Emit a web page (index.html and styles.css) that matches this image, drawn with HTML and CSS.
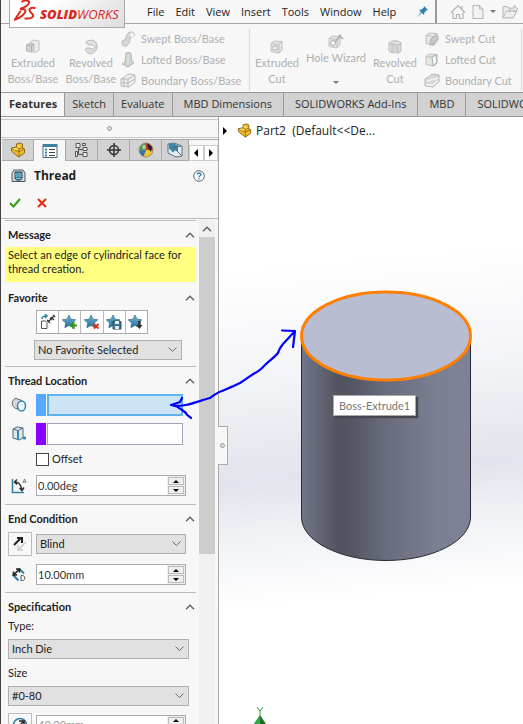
FILE: index.html
```html
<!DOCTYPE html>
<html lang="en">
<head>
<meta charset="utf-8">
<title>SOLIDWORKS - Part2</title>
<link rel="stylesheet" href="styles.css">
</head>
<body>
<svg class="defs" aria-hidden="true">
  <defs>
    <linearGradient id="side" x1="0" x2="1">
      <stop offset="0" stop-color="#70758a"/><stop offset=".1" stop-color="#636775"/><stop offset=".22" stop-color="#51535f"/><stop offset=".3" stop-color="#545664"/><stop offset=".5" stop-color="#686c7c"/><stop offset=".8" stop-color="#7b7f92"/><stop offset="1" stop-color="#7e8296"/>
    </linearGradient>
    <linearGradient id="blue" x1="0" y1="0" x2="0" y2="1"><stop offset="0" stop-color="#70b6d6"/><stop offset="1" stop-color="#276c95"/></linearGradient>
    <symbol id="part" viewBox="0 0 16 16"><path d="M1.500 6 6.500 5V2L10 1l2.500 1v4l2 1v4L9 15 5.500 12.500 1.500 9z" fill="#f0bd2d" stroke="#8a6713"/><path d="M6.500 5 9 6.500 12.500 6M9 6.500v3L14 7.500M1.500 6 5 8.500 9 9.500V15" fill="none" stroke="#8a6713" stroke-width=".8"/><path d="m7 3 3 1v2L7.500 5zM2.500 6.500 6 6l2 1-2.500 1z" fill="#ffe77c"/></symbol>
    <symbol id="star" viewBox="0 0 16 16"><path d="m7 1 2 4.200 4.800.6-3.500 3.200.9 4.700L7 11.400l-4.200 2.300.9-4.700L.2 5.800 5 5.200z" fill="url(#blue)" stroke="#346b8b" stroke-width=".7"/></symbol>
    <symbol id="chev" viewBox="0 0 10 6"><path d="M1 5.200 5 1.200l4 4" fill="none" stroke="#606060" stroke-width="1.400"/></symbol>
    <symbol id="cube" viewBox="0 0 16 16"><path d="M2 4.500 5 2l8 .5V11l-3 3-8-1.500z" fill="#e5e5e5" stroke="#c0c0c0"/><path d="m2 4.500 8 1 3-3M10 5.500V14" fill="none" stroke="#c0c0c0"/></symbol>
  </defs>
</svg>
<div class="app">
  <header class="menubar">
    <div class="brand">
      <svg width="24" height="22" viewBox="0 0 24 22" aria-hidden="true"><path d="M7.500 2C10 0 16 0 15 3 14 6 9 8 6 9M6 9.500c6-1.500 7 1.500 3 5.500-3 3-6 4-8 4.500L6.500 11M21.500 8C16 7 14.500 9 16 11.500c2 2.500 5 3.500 2 6-2 1.500-5 1-7.500 1" fill="none" stroke="#da291c" stroke-width="2"/></svg>
      <span><b>SOLID</b>WORKS</span>
    </div>
    <nav class="menus">
      <a href="#">File</a><a href="#">Edit</a><a href="#">View</a><a href="#">Insert</a><a href="#">Tools</a><a href="#">Window</a><a href="#">Help</a>
    </nav>
    <button class="pin" aria-label="Pin menu"><svg width="11" height="11" viewBox="0 0 11 11"><path d="M7 0 11 4 9.500 4.200 7.500 6.500 7 9 4.800 6.800 0 11 4 6 2 4l2.500-.5 2.300-2z" fill="#2e7fae"/></svg></button>
    <div class="quick">
      <button aria-label="Home"><svg width="16" height="16" viewBox="0 0 16 16"><path d="M1 8.500 8 1.500l7 7M3 8v6.500h3.500v-4h3v4H13V8M12 5V2" fill="none" stroke="#b5b5b5" stroke-width="1.200"/></svg></button>
      <button aria-label="New"><svg width="12" height="16" viewBox="0 0 12 16"><path d="M1 1.500h6.500L11 5v9.500H1zM7.500 1.500V5H11" fill="#f3f3f3" stroke="#b5b5b5"/></svg></button>
      <i class="down"></i>
      <button aria-label="Open"><svg width="17" height="16" viewBox="0 0 17 16"><path d="M1 14V2.500h4l1 1.500h3M1 14h10l4-7H4.500zM7 8c0-3 2-4 5-4V1.500L16 5l-4 3V6" fill="#ececec" stroke="#b5b5b5"/></svg></button>
    </div>
  </header>

  <section class="ribbon" aria-label="Features commands">
    <button class="big wide" disabled><svg width="16" height="16" viewBox="0 0 16 16"><path d="M6 2.500 9 1l5 1v9l-3 2H6z" fill="#ededed" stroke="#c0c0c0"/><path d="M1.500 6 4 4.500l5 .5v6l-2.500 2-5-1z" fill="#d2d2d2" stroke="#b9b9b9"/><path d="m1.500 6 5 1L9 5M6.500 7v6" fill="none" stroke="#b0b0b0"/></svg>Extruded<br>Boss/Base</button>
    <button class="big mid" disabled><svg width="16" height="16" viewBox="0 0 16 16"><path d="M3 3C8-1 15 2 14 8s-6 8-9 6-4-5 0-5 4 2 6 0 0-3-3-3-5-1-5-3z" fill="#dadada" stroke="#b9b9b9"/><path d="M5 3c3-1 6 0 6 3" fill="none" stroke="#f8f8f8"/></svg>Revolved<br>Boss/Base</button>
    <div class="stack boss">
      <button disabled><svg width="16" height="16" viewBox="0 0 16 16"><path d="M2 11c0-3 4-1 4-4s2-6 5-6 4 2 3 4-4 0-4 3-2 7-5 7-3-2-3-4z" fill="#d6d6d6" stroke="#b9b9b9"/><ellipse cx="12" cy="4" rx="2" ry="2.500" fill="#f2f2f2"/></svg>Swept Boss/Base</button>
      <button disabled><svg width="16" height="16" viewBox="0 0 16 16"><path d="m6 1 4-.5 1 1L12 9l2 2-6 4-6-3 3-2z" fill="#cfcfcf" stroke="#b9b9b9"/><path d="M8 2v11" stroke="#e9e9e9"/></svg>Lofted Boss/Base</button>
      <button disabled><svg width="16" height="16" viewBox="0 0 16 16"><path d="M1 6c3-2 4-2 6-4 2-2 6 0 8 0v7l-6 5-8-1z" fill="#eee" stroke="#b9b9b9"/><path d="M1 6h7l7-4M8 6v8M4 6v8M1 10h7l7-4" fill="none" stroke="#b9b9b9"/></svg>Boundary Boss/Base</button>
    </div>
    <i class="rule"></i>
    <button class="big" disabled><svg width="16" height="16" viewBox="0 0 16 16"><use href="#cube"/><path d="M4 7h4v4H4z" fill="#f8f8f8" stroke="#b0b0b0"/></svg>Extruded<br>Cut</button>
    <button class="big wizard" disabled><svg width="18" height="16" viewBox="0 0 18 16"><use href="#cube" width="16" height="16"/><path d="m7 9 7-8M12 1l4 4" stroke="#aaa" stroke-width="1.500"/><circle cx="6" cy="9" r="2.500" fill="#f5f5f5" stroke="#b0b0b0"/></svg>Hole Wizard<i class="down"></i></button>
    <button class="big" disabled><svg width="16" height="16" viewBox="0 0 16 16"><path d="M2 4c3-3 9-3 12 0v8c-1 2-3 2-5 2V6L7 5v9c-2 0-4-1-5-2z" fill="#e0e0e0" stroke="#b9b9b9"/><path d="M2 4c2 2 3 1 5 1m2 1c2 0 4 0 5-2M5 6v7m6-7v7" fill="none" stroke="#b9b9b9"/></svg>Revolved<br>Cut</button>
    <div class="stack cut">
      <button disabled><svg width="16" height="16" viewBox="0 0 16 16"><use href="#cube"/><path d="M6 14c0-5 2-10 8-9v4c-3 0-4 2-4 5z" fill="#c8c8c8" stroke="#b0b0b0"/></svg>Swept Cut</button>
      <button disabled><svg width="16" height="16" viewBox="0 0 16 16"><use href="#cube"/><path d="m8 5 4-2 1 7-4 4z" fill="#f5f5f5" stroke="#b0b0b0"/></svg>Lofted Cut</button>
      <button disabled><svg width="16" height="16" viewBox="0 0 16 16"><path d="M1 6c3-2 4-2 6-4 2-2 6 0 8 0v7l-6 5-8-1z" fill="#d6d6d6" stroke="#b9b9b9"/><path d="m3 8 11-3M2 12h7l5-4" stroke="#f5f5f5" stroke-width="1.500" fill="none"/></svg>Boundary Cut</button>
    </div>
    <i class="rule"></i>
  </section>

  <nav class="tabs">
    <a class="on" href="#">Features</a><a href="#">Sketch</a><a href="#">Evaluate</a><a href="#">MBD Dimensions</a><a href="#">SOLIDWORKS Add-Ins</a><a href="#">MBD</a><a href="#">SOLIDWORKS CAM</a>
  </nav>

  <main class="work">
    <aside class="panel">
      <div class="grip"><i class="dot"></i></div>
      <div class="managers">
        <button aria-label="Feature tree"><svg width="16" height="16"><use href="#part"/></svg></button>
        <button class="on" aria-label="Property manager"><svg width="16" height="16" viewBox="0 0 16 16"><path d="M1 1.500h14v13H1z" fill="#fff" stroke="#48677c"/><path d="M1 1h14v3H1z" fill="#3f7fa5"/><path d="M3 6.500h2m-2 3h2m-2 3h2" stroke="#3f7fa5" stroke-width="2"/><path d="M7 6.500h6m-6 3h6m-6 3h6" stroke="#444"/></svg></button>
        <button aria-label="Configurations"><svg width="16" height="16" viewBox="0 0 16 16" fill="#eee" stroke="#555"><path d="M4.500 5v7.500H9M4.500 7.500H9" fill="none"/><path d="M2 1.500h4v4H2zM9 5.500h4v3H9zM9 10.500h4v4H9zM8.500 1.500h3v2h-3zM1.500 9.500h2v5h-2z"/></svg></button>
        <button aria-label="Dimensions"><svg width="16" height="16" viewBox="0 0 16 16" fill="none" stroke="#333" stroke-width="1.500"><circle cx="8" cy="8" r="4.500"/><path d="M8 1v14M1 8h14"/></svg></button>
        <button aria-label="Appearances"><svg width="16" height="16" viewBox="0 0 16 16"><circle cx="8" cy="8" r="7" fill="#f1c52e"/><path d="M8 8 1.500 9A7 7 0 0 1 8 1z" fill="#3a9b48"/><path d="M8 8V1a7 7 0 0 1 7 7z" fill="#d93529"/><path d="m9 1 5 4-1 5-3-4z" fill="#222"/><path d="M8 8 1.500 9a7 7 0 0 0 4 5.500z" fill="#2f6ebc"/><circle cx="8" cy="8" r="7" fill="none" stroke="#777" stroke-width=".7"/><ellipse cx="6" cy="5" rx="2" ry="2.500" fill="#fff" opacity=".5"/></svg></button>
        <button class="last" aria-label="Machining"><svg width="16" height="16" viewBox="0 0 16 16"><path d="m1 2 6-1 8 3v10l-6 1-8-4z" fill="#e6edf1" stroke="#527084"/><path d="m2 2 5-.500 4 2v6l-3-1-2 2-4-4z" fill="#3f86aa"/><path d="m9 8 5 5M6 6l8-2" stroke="#4b6575"/></svg></button>
        <div class="pager"><button aria-label="Previous"><i class="tri left"></i></button><button aria-label="Next"><i class="tri right"></i></button></div>
      </div>
      <div class="title">
        <svg width="15" height="14" viewBox="0 0 15 14"><path d="M1 4 3 1h9l2 3v8.500H1z" fill="#d6dadd" stroke="#50565b"/><path d="M4 3h7v6c0 3-7 3-7 0z" fill="#347ea4" stroke="#28485c"/><path d="M4 5h7M4 7h7M5 9.500h5" stroke="#d3edf8" stroke-width=".6"/></svg>
        <h1>Thread</h1>
        <button aria-label="Help"><svg width="12" height="12" viewBox="0 0 12 12" fill="none"><circle cx="6" cy="6" r="5.300" fill="#fff" stroke="#5b6870"/><path d="M4.200 4.500C4.200 2.500 8 2.500 8 4.500 8 5.800 6 5.800 6 7.200M6 8.200v1.300" stroke="#287cae" stroke-width="1.300"/></svg></button>
      </div>
      <div class="confirm">
        <button aria-label="OK"><svg width="12" height="10" viewBox="0 0 12 10"><path d="m1 5 3.500 3.500L11 1" fill="none" stroke="#30a010" stroke-width="2"/></svg></button>
        <button aria-label="Cancel"><svg width="10" height="10" viewBox="0 0 10 10"><path d="m1 1 8 8m0-8L1 9" stroke="#e62b0c" stroke-width="2"/></svg></button>
      </div>
      <div class="scroll">
        <form class="groups">
          <section class="group">
            <h2>Message<svg width="10" height="6"><use href="#chev"/></svg></h2>
            <p class="message">Select an edge of cylindrical face for thread creation.</p>
          </section>
          <section class="group fav">
            <h2>Favorite<svg width="10" height="6"><use href="#chev"/></svg></h2>
            <div class="icons">
              <button type="button" aria-label="Apply defaults"><svg width="16" height="16" viewBox="0 0 16 16"><path d="M1.500 7h4L7 8.500v6H1.500z" fill="#fff" stroke="#555"/><path d="M2 5c0-3 2-3 5-3M5 0l2 2-2 2" fill="none" stroke="#347ea4" stroke-width="1.500"/><path d="m8 8 6-6M7 6l3 3m1-6 3 3m-4-2 2 2m1-5 2 2" stroke="#333" stroke-width="1.300"/></svg></button>
              <button type="button" aria-label="Add favorite"><svg width="16" height="16" viewBox="0 0 16 16"><use href="#star"/><path d="M11.500 8v7M8 11.500h7" stroke="#339b12" stroke-width="2.200"/></svg></button>
              <button type="button" aria-label="Delete favorite"><svg width="16" height="16" viewBox="0 0 16 16"><use href="#star"/><path d="m10 10 4.500 4.500m0-4.500L10 14.500" stroke="#e62b0c" stroke-width="1.800"/></svg></button>
              <button type="button" aria-label="Save favorite"><svg width="16" height="16" viewBox="0 0 16 16"><use href="#star"/><path d="M7 7h7l1 1v7H7z" fill="#397894" stroke="#334e5e"/><path d="M9 7h4v3H9zM9 12h4v3H9z" fill="#e5edf2"/></svg></button>
              <button type="button" aria-label="Load favorite"><svg width="16" height="16" viewBox="0 0 16 16"><use href="#star"/><path d="M11.500 7v4" stroke="#333" stroke-width="2.500"/><path d="M8.500 11h6l-3 4z" fill="#333"/></svg></button>
            </div>
            <select class="favorite" aria-label="Favorite"><option>No Favorite Selected</option></select>
          </section>
          <section class="group location">
            <h2>Thread Location<svg width="10" height="6"><use href="#chev"/></svg></h2>
            <div class="row">
              <svg width="16" height="16" viewBox="0 0 16 16"><path d="m5 1.500 6 2v10l-6-2C0 10 0 2 5 1.500z" fill="#d7dadd" stroke="#666"/><ellipse cx="10.500" cy="9" rx="4" ry="5" fill="#eef8fc" stroke="#3587aa" stroke-width="1.500"/></svg>
              <div class="pick blue"><input class="active" type="text" aria-label="Edge of cylinder"></div>
            </div>
            <div class="row">
              <svg width="16" height="16" viewBox="0 0 16 16"><path d="m2 3 4-2 6 1v10l-4 2-6-2z" fill="#dceaf0" stroke="#4e6978"/><path d="m2 3 5 1.500L12 2M7 4.500V14" fill="none" stroke="#4e6978"/><path d="M7 5v9M12 12h3m-1.500-1.500v3" stroke="#338ab0" stroke-width="2"/></svg>
              <div class="pick purple"><input type="text" aria-label="Optional start location"></div>
            </div>
            <label class="check"><input type="checkbox">Offset</label>
            <div class="row">
              <svg width="16" height="16" viewBox="0 0 16 16"><path d="M1.500 1v13.500H13" fill="none" stroke="#347ea4" stroke-width="1.600"/><path d="M4 4c4 0 6 3 7 8M6 1.500 3.500 4 6 6.500M8.500 10l2.500 2.500L13 9.500" fill="none" stroke="#333" stroke-width="1.500"/><path d="m12 5 1.500-4L15 5m-2.500-1h2" fill="none" stroke="#666" stroke-width=".8"/></svg>
              <div class="spin"><input type="text" value="0.00deg" aria-label="Start angle"><span><button type="button" aria-label="Increase"><i class="tri up"></i></button><button type="button" aria-label="Decrease"><i class="tri dn"></i></button></span></div>
            </div>
          </section>
          <section class="group end">
            <h2>End Condition<svg width="10" height="6"><use href="#chev"/></svg></h2>
            <div class="row">
              <button class="tool" type="button" aria-label="Reverse direction"><svg width="14" height="16" viewBox="0 0 14 16"><path d="m1 9 7-7M4 2h5v5" fill="none" stroke="#222" stroke-width="2"/><path d="m13 6-7 7M5 9v5h5" fill="none" stroke="#ccc" stroke-width="1.500"/></svg></button>
              <select aria-label="End condition"><option>Blind</option></select>
            </div>
            <div class="row">
              <svg width="16" height="16" viewBox="0 0 16 16"><path d="m8 1.500 5 5M1.500 7.500l6 6" stroke="#347ea4" stroke-width="2"/><path d="m3 7.500 5-5M2.500 4.500v3.500H6M5 2h3.500v3.500" fill="none" stroke="#222" stroke-width="1.600"/><path d="M10 8.500v5h1.500c3 0 3-5 0-5z" fill="none" stroke="#555"/></svg>
              <div class="spin"><input type="text" value="10.00mm" aria-label="Depth"><span><button type="button" aria-label="Increase"><i class="tri up"></i></button><button type="button" aria-label="Decrease"><i class="tri dn"></i></button></span></div>
            </div>
          </section>
          <section class="group spec">
            <h2>Specification<svg width="10" height="6"><use href="#chev"/></svg></h2>
            <label for="type">Type:</label>
            <select id="type"><option>Inch Die</option></select>
            <label for="size">Size</label>
            <select id="size"><option>#0-80</option></select>
            <div class="row">
              <button class="tool" type="button" aria-label="Override diameter"><svg width="16" height="16" viewBox="0 0 16 16"><circle cx="8" cy="8" r="6.500" fill="#fff" stroke="#347ea4" stroke-width="1.600"/><path d="m4 12 7-7M7 4h5v5" fill="none" stroke="#222" stroke-width="1.600"/></svg></button>
              <div class="spin"><input type="text" value="40.00mm" aria-label="Diameter" disabled><span><button type="button" aria-label="Increase"><i class="tri up"></i></button><button type="button" aria-label="Decrease"><i class="tri dn"></i></button></span></div>
            </div>
          </section>
        </form>
        <div class="bar"><svg width="10" height="6"><use href="#chev"/></svg><i></i></div>
      </div>
      <button class="splitter" aria-label="Collapse panel"><i class="dot"></i></button>
    </aside>

    <section class="view" aria-label="Graphics area">
      <div class="tree"><i class="tri right"></i><svg width="15" height="15"><use href="#part"/></svg><span>Part2&nbsp; (Default&lt;&lt;De...</span></div>
      <svg class="model" width="172" height="273" viewBox="0 0 172 273" aria-hidden="true">
        <path d="M1.500 46v181c0 24 38 43.500 84.500 43.500s84.500-19.500 84.500-43.500V46z" fill="url(#side)" stroke="#292a30"/>
        <ellipse cx="86" cy="46" rx="84.500" ry="44" fill="#b8bdd4" stroke="#ff8000" stroke-width="3"/>
      </svg>
      <div class="tip">Boss-Extrude1</div>
      <svg class="axis" width="20" height="20" viewBox="0 0 20 20" aria-hidden="true"><path d="m7 3 3 4 3-4m-3 4v4" fill="none" stroke="#35a23d"/><path d="m10 11 6 9H4z" fill="#197027"/><path d="M10 11v9H4z" fill="#35a94a"/></svg>
    </section>
  </main>
  <svg class="ink" width="140" height="100" viewBox="165 325 140 100" aria-hidden="true"><path d="M171 405c5 1 10 1 15 0 9-2 16-5 24-7 5-3 7-6 12-7 7-3 12-5 18-8 7-4 11-8 15-10 5-2 9-7 11-9 4-4 8-6 12-11 2-5 1-4 5-9l12-13M282 330.500l13 .5-2 16M182 398l-2 4-9 3c8 1 11 5 15 8 0 2 3 3 5 5" fill="none" stroke="#00f" stroke-width="2.200" stroke-linecap="round" stroke-linejoin="round"/></svg>
</div>
</body>
</html>
```

FILE: styles.css
```css
* { box-sizing: border-box; }
body { margin: 0; font: 12px/14px "Open Sans", "Noto Sans", sans-serif; color: #333; }
button { padding: 0; border: 0; background: none; font: inherit; color: inherit; }
a { color: inherit; text-decoration: none; }
svg { flex: none; display: block; }
h1, h2, p { margin: 0; }
.defs { position: absolute; width: 0; height: 0; }
.app { position: relative; height: 100vh; overflow: hidden; display: flex; flex-direction: column; background: #f7f7f7; border-left: 1px solid #444; }

.menubar { flex: none; height: 24px; display: flex; align-items: stretch; border-bottom: 1px solid #a8a8a8; }
.brand { position: relative; z-index: 2; flex: none; width: 116px; height: 28px; margin-left: 8px; padding-left: 4px; display: flex; align-items: center; gap: 2px; border: 1px solid #aaa; border-top: 0; background: linear-gradient(135deg, #fff 30%, #ddd); color: #da291c; font: italic 13px/16px "Open Sans", sans-serif; }
.brand svg { margin-bottom: 6px; }
.brand b { font-weight: 800; }
.menus { flex: none; display: flex; align-items: center; gap: 11px; margin-left: 22px; font-size: 11px; color: #222; }
.pin { margin-left: auto; }
.quick { flex: none; width: 88px; display: flex; align-items: center; gap: 6px; margin-left: 7px; padding-left: 13px; border-left: 2px solid #999; overflow: hidden; }
.quick button { flex: none; }
.down { border: 3px solid transparent; border-top-color: #777; border-bottom: 0; }

.ribbon { flex: none; height: 69px; display: flex; align-items: flex-start; font: 11px/14px Lato, "Open Sans", sans-serif; border-bottom: 1px solid #999; }
.ribbon button { color: #b0b0b0; white-space: nowrap; }
.big { flex: none; width: 54px; display: flex; flex-direction: column; align-items: center; padding-top: 15px; }
.ribbon .big { line-height: 16px; }
.wide { width: 64px; }
.mid { width: 52px; }
.wizard { width: 64px; padding-top: 10px; }
.wizard .down { margin-top: 15px; }
.stack { flex: none; display: flex; flex-direction: column; gap: 5px; padding-top: 7px; }
.stack button { display: flex; align-items: center; gap: 5px; height: 16px; }
.boss { width: 129px; margin-left: 3px; }
.cut { width: 97px; margin-left: 2px; }
.rule { flex: none; width: 1px; height: 62px; margin-top: 5px; background: #d8d8d8; }

.tabs { flex: none; height: 24px; display: flex; border-bottom: 1px solid #8e9ca0; font-size: 11px; background: #d2d2d2; }
.tabs a { flex: none; padding: 4px 7px; border-right: 1px solid #999; white-space: nowrap; }
.tabs a:nth-child(n+4) { padding: 4px 11px; }
.tabs .on { padding-left: 8px; background: #f7f7f7; font-weight: bold; }

.work { flex: 1; min-height: 0; display: flex; }
.panel { position: relative; flex: none; width: 218px; display: flex; flex-direction: column; border-right: 1px solid #aaa; }
.grip { flex: none; height: 19px; margin-top: 2px; display: grid; place-items: center; border: solid #c8c8c8; border-width: 1px 0; }
.dot { width: 5px; height: 5px; border: 1px solid #999; border-radius: 50%; background: #ddd; }
.managers { flex: none; height: 22px; margin: 1px 0 0 1px; display: flex; }
.managers > button { width: 32px; display: grid; place-items: center; background: #d2d2d2; border: solid #aaa; border-width: 1px 1px 1px 0; }
.managers > .on { background: #f7f7f7; border-bottom: 0; }
.managers > .last { width: 27px; }
.pager { display: flex; flex: 1; border-top: 1px solid #aaa; padding-top: 5px; }
.pager button { flex: 1; display: grid; place-items: center; border: 1px solid #ccc; background: #fff; }
.tri { border: 4px solid transparent; }
.left { border-right-color: #000; border-left: 0; }
.right { border-left-color: #000; border-right: 0; }
.up { border-bottom-color: #000; border-top: 0; }
.dn { border-top-color: #000; border-bottom: 0; }
.title { flex: none; height: 30px; display: flex; align-items: center; gap: 8px; padding: 0 13px 0 10px; }
h1 { flex: 1; font-size: 12px; line-height: 18px; color: #222; }
.confirm { flex: none; height: 28px; display: flex; align-items: center; gap: 16px; padding: 0 8px 4px; border-bottom: 1px solid #bbb; }
.scroll { flex: 1; min-height: 0; display: flex; overflow: hidden; }
.groups { flex: 1; min-width: 0; height: 0; padding: 1px 0 0 4px; font: 11px/14px Lato, "Open Sans", sans-serif; color: #222; }
.group { border-top: 1px solid #bbb; padding: 6px 7px 8px 3px; }
h2 { display: flex; align-items: center; justify-content: space-between; margin-bottom: 4px; font-size: 11px; line-height: 16px; }
h2 svg { margin-right: -6px; }
.message { height: 35px; margin: 0 -7px 0 -3px; padding: 1px 3px; background: #ffff80; color: #222; }
.fav { border: 0; padding: 0 7px 6px 3px; }
.icons { display: flex; width: 112px; margin-left: 28px; border: 1px solid #aaa; background: #fff; }
.icons button { flex: 1; height: 22px; display: grid; place-items: center; border-right: 1px solid #bbb; }
.icons button:last-child { border: 0; }
select { appearance: none; display: block; width: 100%; height: 20px; padding: 0 3px; border: 1px solid #b0b0b0; border-radius: 0; color: #222; font: inherit; background: #e1e1e1 url("data:image/svg+xml,%3Csvg xmlns='http://www.w3.org/2000/svg' width='9' height='6'%3E%3Cpath d='M.5.5l4 4 4-4' fill='none' stroke='%23666'/%3E%3C/svg%3E") no-repeat right 4px center; }
.icons + select { width: 148px; margin: 6px 0 0 26px; }
.row { display: flex; align-items: center; gap: 12px; }
.row > svg { margin: 0 -3px 0 3px; }
.row > select, .spin { flex: 1; min-width: 0; width: auto; margin-right: 3px; }
.pick { flex: 1; min-width: 0; height: 22px; margin-right: 6px; display: flex; gap: 1px; }
.pick::before { content: ""; flex: none; width: 10px; background: #56a8ff; }
.purple::before { background: #80f; }
.pick input { flex: 1; min-width: 0; border: 1px solid #a5a5b8; background: #fff; }
.pick .active { border: 2px solid #5eb4e8; background: #cde3f8; }
.location h2, .end h2 { margin-bottom: 5px; }
.location .row { margin-bottom: 7px; }
.check { display: flex; align-items: center; gap: 3px; margin: 0 0 9px 28px; }
.check input { appearance: none; width: 13px; height: 13px; margin: 0; border: 1px solid #444; background: #fff; }
.location .row:last-child { margin-bottom: 0; }
.spin { height: 21px; display: flex; border: 1px solid #aaaab5; background: #fff; }
.spin input { flex: 1; min-width: 0; padding: 0 1px; border: 0; background: none; font: inherit; color: #333; }
.spin input:disabled { color: #999; }
.spin span { flex: none; width: 18px; padding: 1px; display: flex; flex-direction: column; gap: 1px; background: #eee; }
.spin span button { flex: 1; display: grid; place-items: center; border: 1px solid #bbb; background: #eee; }
.spin .tri { border-width: 3px; }
.spin .up { border-top: 0; }
.spin .dn { border-bottom: 0; }
.tool { width: 24px; height: 24px; display: grid; place-items: center; border: 1px solid #bbb; flex: none; }
.row > .tool { margin-right: -8px; }
.end { padding-bottom: 7px; }
.end .row + .row { margin-top: 8px; }
.spec label { display: block; margin: 0 0 6px; }
.spec select { width: 181px; margin-bottom: 7px; }
.bar { flex: none; width: 16px; margin: 0 3px 0 3px; padding-top: 7px; display: flex; flex-direction: column; align-items: center; gap: 5px; background: #f0f0f0; }
.bar i { width: 100%; height: 317px; background: #cdcdcd; }
.splitter { position: absolute; top: 309px; right: -10px; width: 10px; height: 39px; display: grid; place-items: center; border: 1px solid #aaa; border-left: 0; background: #f7f7f7; z-index: 1; }

.view { position: relative; flex: 1; min-width: 0; background: linear-gradient(175deg, #fff 24%, #f3f4f7 42%, #e1e4ec 58%, #eff1f5 66%, #fff 78%); }
.tree { display: flex; align-items: center; padding: 6px 0 0 4px; color: #222; }
.tree svg { margin: 0 4px 0 10px; }
.model { position: absolute; left: 81px; top: 173px; }
.tip { position: absolute; left: 114px; top: 278px; padding: 2px 5px; background: #fff; border: 1px solid #aaa; color: #777; font: 11px/15px Lato, "Open Sans", sans-serif; box-shadow: 2px 2px 1px #444650; }
.axis { position: absolute; left: 31px; bottom: 0; }
.ink { position: absolute; left: 164px; top: 325px; z-index: 3; pointer-events: none; }
```
